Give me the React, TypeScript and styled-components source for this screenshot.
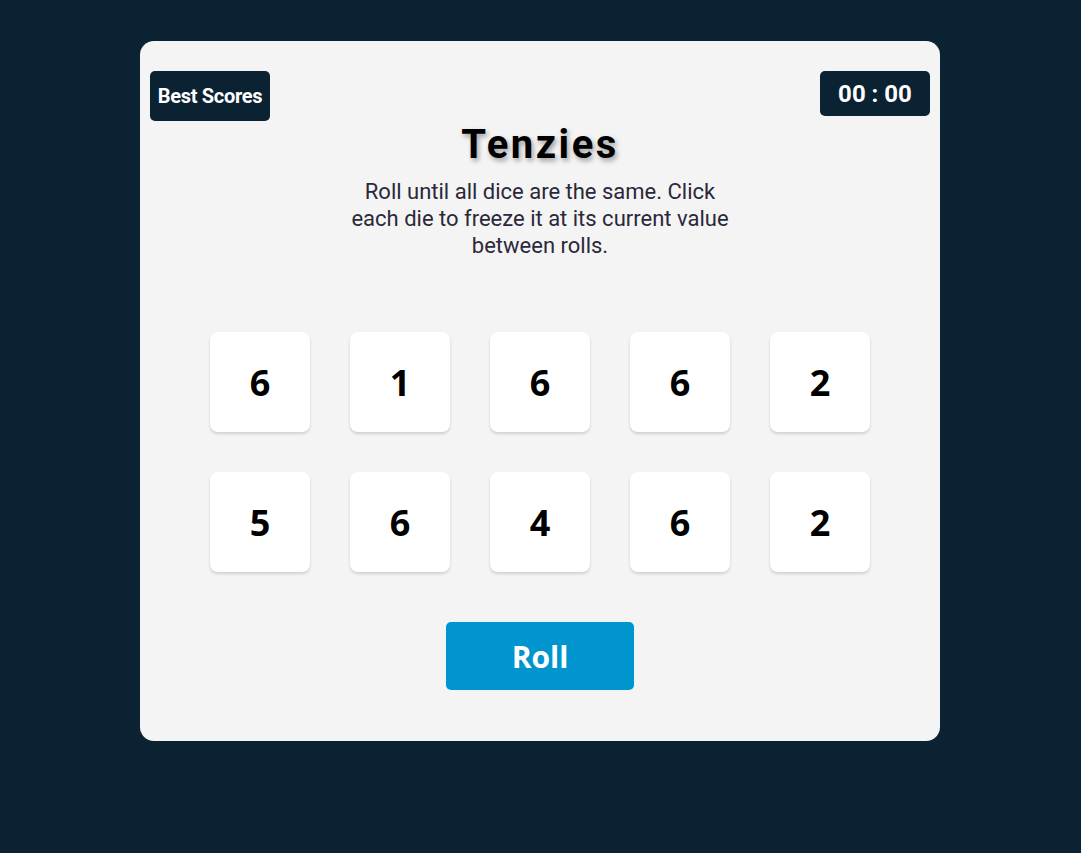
import React from "react"
import styled, { createGlobalStyle } from "styled-components"

const GlobalStyle = createGlobalStyle`
  body {
    margin: 0;
    background: #0b2233;
    font-family: Roboto, "Noto Sans", sans-serif;
  }
`

let Page = styled.main`
  min-height: 853px;
  padding: 41px 0 0 140px;
  box-sizing: border-box;
  display: flex;
  align-items: flex-start;
`

let Board = styled.div`
  width: 800px;
  height: 700px;
  background: #f4f4f4;
  border-radius: 14px;
  box-sizing: border-box;
  padding: 30px 10px 0;
  display: flex;
  flex-direction: column;
  align-items: center;
`

let TopBar = styled.div`
  width: 100%;
  display: flex;
  justify-content: space-between;
  align-items: flex-start;
  height: 50px;
`

let BestScoresButton = styled.button`
  width: 120px;
  height: 50px;
  border: none;
  border-radius: 5px;
  background: #0b2233;
  color: #fff;
  font-family: Roboto, sans-serif;
  font-weight: 700;
  font-size: 20px;
  letter-spacing: -0.3px;
  padding: 0;
  cursor: pointer;
`

let Timer = styled.div`
  width: 110px;
  height: 45px;
  border-radius: 5px;
  background: #0b2233;
  color: #fff;
  font-family: Roboto, sans-serif;
  font-weight: 700;
  font-size: 24px;
  display: flex;
  align-items: center;
  justify-content: center;
`

let Title = styled.h1`
  margin: 0;
  font-family: Roboto, sans-serif;
  font-size: 40px;
  font-weight: 700;
  letter-spacing: 2.5px;
  color: #000;
  text-shadow: 2px 3px 5px rgba(0, 0, 0, 0.35);
`

let Instructions = styled.p`
  margin: 10px 0 0;
  width: 386px;
  text-align: center;
  font-size: 22px;
  line-height: 27px;
  color: #2b283a;
`

let DiceGrid = styled.div`
  margin-top: 73px;
  display: grid;
  grid-template-columns: repeat(5, 100px);
  gap: 40px;
`

let Die = styled.button<{ $held?: boolean }>`
  width: 100px;
  height: 100px;
  border: none;
  border-radius: 8px;
  background: ${(p) => (p.$held ? "#59e391" : "#fff")};
  box-shadow: 0 2px 3px rgba(0, 0, 0, 0.15);
  font-family: "Open Sans", sans-serif;
  font-weight: 700;
  font-size: 36px;
  color: #000;
  padding: 0;
  cursor: pointer;
`

let RollButton = styled.button`
  margin-top: 50px;
  width: 188px;
  height: 68px;
  border: none;
  border-radius: 5px;
  background: #0095ce;
  color: #fff;
  font-family: "Open Sans", sans-serif;
  font-weight: 700;
  font-size: 30px;
  cursor: pointer;
`

const dice = [6, 1, 6, 6, 2, 5, 6, 4, 6, 2]

export default function App() {
  return (
    <>
      <GlobalStyle />
      <Page>
        <Board>
          <TopBar>
            <BestScoresButton>Best Scores</BestScoresButton>
            <Timer>00 : 00</Timer>
          </TopBar>
          <Title>Tenzies</Title>
          <Instructions>
            Roll until all dice are the same. Click each die to freeze it at
            its current value between rolls.
          </Instructions>
          <DiceGrid>
            {dice.map((value, i) => (
              <Die key={i}>{value}</Die>
            ))}
          </DiceGrid>
          <RollButton>Roll</RollButton>
        </Board>
      </Page>
    </>
  )
}
